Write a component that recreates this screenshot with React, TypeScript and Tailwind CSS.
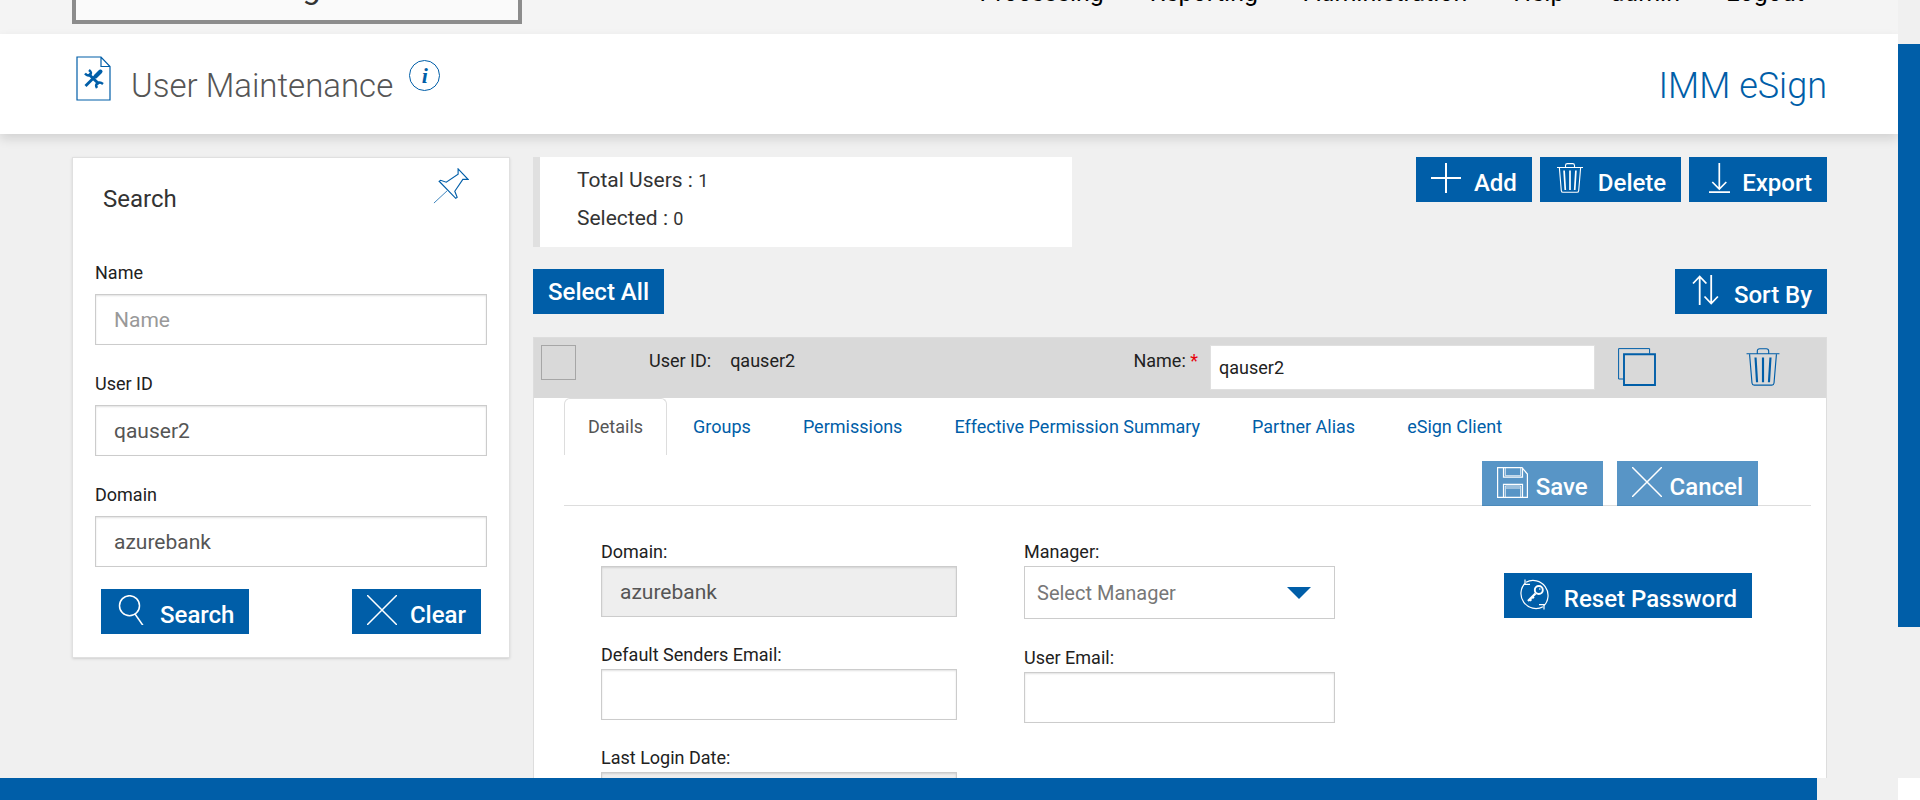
import React from "react";

const BLUE = "#005ea8";

type IconProps = { className?: string };

function Svg({ className, children, box = "0 0 30 30", w = 1.4 }: IconProps & { children: React.ReactNode; box?: string; w?: number }) {
  return (
    <svg viewBox={box} className={className} fill="none" stroke="currentColor" strokeWidth={w} aria-hidden="true">
      {children}
    </svg>
  );
}

const Plus = () => (
  <Svg className="size-[30px]" w={2}>
    <path d="M15 0v30M0 15h30" />
  </Svg>
);
const TrashPaths = () => (
  <>
    <path d="M2 4.500h26M10.500 4.500V2.500q0-1.900 1.900-1.900h5.200q1.900 0 1.900 1.900v2M4.400 5l1.900 22.600q.2 1.700 1.700 1.700h14q1.500 0 1.700-1.700L25.600 5" />
    <path d="M9.100 7.500l1.200 19.500M15 7.500V27M20.900 7.500L19.700 27" strokeWidth="1.700" />
  </>
);
const Trash = () => (
  <Svg className="size-[30px]" w={1.1}>
    <TrashPaths />
  </Svg>
);
const Download = () => (
  <Svg className="size-[30px]" w={1.7}>
    <path d="M15.300 0v26M8.300 19l7 7 7-7M5 29.200h21" />
  </Svg>
);
const Sort = () => (
  <Svg className="size-[30px]" w={1.8}>
    <path d="M9.700 30V2M3 8.500L9.700 1.500 16.400 8.500M21.200 0v28M14.500 21.500l6.700 7 6.700-7" />
  </Svg>
);
const Cross = () => (
  <Svg className="size-[30px]" w={1.5}>
    <path d="M0 0l30 30M30 0L0 30" />
  </Svg>
);
const Magnifier = () => (
  <Svg className="size-[30px]" w={1.5}>
    <circle cx="13.500" cy="10.700" r="10" />
    <path d="M19 19l8 11.500" />
  </Svg>
);
const Floppy = () => (
  <Svg className="size-[31px]" box="0 0 31 31" w={1.2}>
    <path d="M.6.6h24.400l5.400 6.400v23.400H.6zM6.500.6v9.600h19V.6M6.500 30.400V17.300h19v13.100" />
    <path d="M8.300 1v7.700h15.400V1M8.300 30V19h15.400v11M9 21h14" strokeWidth=".8" />
  </Svg>
);
const ResetKey = () => (
  <Svg className="size-[31px]" box="0 0 31 31" w={1.2}>
    <path d="M7 3.200A15 15 0 0 1 24.500 27.200M24 27.800A15 15 0 0 1 6.500 3.800M6 .5v4.800h5M25 30.500v-4.800h-5" />
    <circle cx="19.800" cy="11" r="4" strokeWidth="1.900" />
    <circle cx="20.800" cy="10" r=".8" fill="currentColor" stroke="none" />
    <path d="M16.500 14.500L9 22M13 17.500l1.800 1.800M10.500 20l1.800 1.800" strokeWidth="2.300" />
  </Svg>
);
const Pin = () => (
  <Svg className="size-9" box="0 0 38 38" w={1.2}>
    <path d="M26.500 1L37 12 31.500 12 23 24.500 25.500 31 24 32 6.500 14 8 13 14 15 26.500 6.500z" />
    <path d="M15 24L1 37" strokeWidth=".8" />
  </Svg>
);
const Copy = () => (
  <Svg className="size-[38px]" box="0 0 38 38" w={1}>
    <path d="M5.500 31H.6V.6h31v5" />
    <path d="M6 6.300h31v30.700H6z" strokeWidth="1.900" />
  </Svg>
);
const PageTools = () => (
  <svg viewBox="0 0 35 45" className="h-[45px] w-[35px]" fill="none" stroke={BLUE} strokeWidth="1.200" aria-hidden="true">
    <path d="M1 1h24l9 9.500V44H1zM25 1v9.500h9" />
    <path d="M12.500 18L23 28" strokeWidth="3" />
    <path d="M25 14.500L9.500 30" strokeWidth="2.800" />
    <path d="M24.500 15.500l-5 5" strokeWidth="4" strokeLinecap="round" />
    <path d="M9 17.500q2.500 3 5 1.200T13 14M27 28q-3-2.500-5.500-.8t-.5 4.800" strokeWidth="2.400" />
  </svg>
);

function ActionButton({ icon, label, className = "" }: { icon?: React.ReactNode; label: string; className?: string }) {
  return (
    <button type="button" className={`flex h-[45px] items-start bg-[#005ea8] px-[15px] text-2xl font-medium whitespace-nowrap text-white ${className}`}>
      {icon && <span className="mt-[6px] shrink-0">{icon}</span>}
      <span className={icon ? "mt-[10px]" : "mt-[7px]"}>{label}</span>
    </button>
  );
}

const inputClass =
  "h-[51px] w-full border border-[#ccc] bg-white px-[18px] text-[21px] text-[#555] shadow-[inset_0_1px_2px_rgba(0,0,0,0.12)] outline-none placeholder:text-[#999] disabled:bg-[#eee]";

function SearchField({ id, label, value }: { id: string; label: string; value?: string }) {
  return (
    <div>
      <label htmlFor={id} className="mb-[7px] block text-lg leading-7 text-[#212121]">{label}</label>
      <input id={id} className={inputClass} placeholder={label} defaultValue={value} />
    </div>
  );
}

function DetailField({ id, label, value, disabled }: { id: string; label: string; value?: string; disabled?: boolean }) {
  return (
    <div className="mb-6">
      <label htmlFor={id} className="block text-lg leading-7 text-[#212121]">{label}</label>
      <input id={id} className={inputClass} defaultValue={value} disabled={disabled} />
    </div>
  );
}

const navItems = ["Processing", "Reporting", "Administration", "Help", "admin", "Logout"];
const tabs = ["Groups", "Permissions", "Effective Permission Summary", "Partner Alias", "eSign Client"];

function TopBar() {
  return (
    <header className="flex h-[34px] items-end justify-between bg-[#f4f4f4] pr-[94px] pl-[72px]">
      <div className="mb-[10px] flex h-20 w-[450px] items-end justify-center border-4 border-[#8c8c8c] bg-[#fafafa] pb-4 text-[32px] leading-8 text-[#333]">
        Place Logo Here
      </div>
      <nav className="mb-[27px] flex gap-[46px] text-[25px] leading-7 text-black">
        {navItems.map((item) => (
          <a key={item} href="#">{item}</a>
        ))}
      </nav>
    </header>
  );
}

function SearchPanel() {
  return (
    <aside className="w-[438px] shrink-0 border border-[#e0e0e0] bg-white px-[22px] pb-[23px] shadow-sm">
      <div className="flex h-[101px] items-start justify-between pr-[18px] pl-2">
        <h2 className="mt-[25px] text-2xl leading-8 text-[#333]">Search</h2>
        <button type="button" aria-label="Pin" className="mt-[10px] text-[#005ea8]"><Pin /></button>
      </div>
      <div className="flex flex-col gap-[25px]">
        <SearchField id="name" label="Name" />
        <SearchField id="user-id" label="User ID" value="qauser2" />
        <SearchField id="domain" label="Domain" value="azurebank" />
      </div>
      <div className="mt-[22px] flex justify-between px-[6px]">
        <ActionButton icon={<Magnifier />} label="Search" className="gap-[14px]" />
        <ActionButton icon={<Cross />} label="Clear" className="gap-[13px]" />
      </div>
    </aside>
  );
}

function UserCard() {
  return (
    <section className="mt-[23px] border border-[#ddd] bg-white">
      <div className="flex h-[60px] items-start bg-[#d9d9d9] pl-[7px] text-lg leading-7 text-[#212121]">
        <input type="checkbox" aria-label="Select qauser2" className="mt-[7px] size-[35px] shrink-0 appearance-none border border-[#a6a6a6]" />
        <span className="mt-[9px] ml-[73px]">User ID:</span>
        <span className="mt-[9px] ml-[19px]">qauser2</span>
        <label htmlFor="user-name" className="mt-[9px] ml-auto">Name: <span className="text-red-600">*</span></label>
        <input id="user-name" defaultValue="qauser2" className="mt-[7px] ml-3 h-[45px] w-[385px] border border-[#e0e0e0] bg-white px-2 text-lg outline-none" />
        <button type="button" aria-label="Copy user" className="mt-[10px] ml-[23px] text-[#005ea8]"><Copy /></button>
        <button type="button" aria-label="Delete user" className="mt-[10px] mr-[44px] ml-[88px] text-[#005ea8]">
          <Svg className="size-[38px]" w={0.9}><TrashPaths /></Svg>
        </button>
      </div>
      <div className="pr-[15px] pl-[30px]">
        <div className="flex h-[57px] text-lg leading-7">
          <button type="button" className="mr-[26px] rounded-t-md border border-b-0 border-[#ddd] px-[23px] text-[#555]">Details</button>
          <div className="flex gap-[52px] text-[#005ea8]">
            {tabs.map((tab) => (
              <button type="button" key={tab}>{tab}</button>
            ))}
          </div>
        </div>
        <div className="flex justify-end gap-[14px] border-b border-[#ddd] pt-[6px] pr-[53px]">
          <ActionButton icon={<Floppy />} label="Save" className="-mb-px gap-[8px] opacity-65" />
          <ActionButton icon={<Cross />} label="Cancel" className="-mb-px gap-[8px] opacity-65" />
        </div>
        <div className="flex items-start pt-[32px] pr-[59px] pl-[37px]">
          <div className="w-[356px] shrink-0">
            <DetailField id="detail-domain" label="Domain:" value="azurebank" disabled />
            <DetailField id="sender-email" label="Default Senders Email:" />
            <DetailField id="last-login" label="Last Login Date:" disabled />
          </div>
          <div className="ml-[67px] w-[311px] shrink-0">
            <div className="mb-[25px]">
              <label htmlFor="manager" className="block text-lg leading-7 text-[#212121]">Manager:</label>
              <div className="relative">
                <select id="manager" className="h-[53px] w-full appearance-none border border-[#ccc] bg-white px-3 text-xl text-[#777] outline-none">
                  <option>Select Manager</option>
                </select>
                <svg viewBox="0 0 24 12" className="pointer-events-none absolute top-[21px] right-6 h-3 w-6" aria-hidden="true">
                  <path d="M0 0h24L12 12z" fill={BLUE} />
                </svg>
              </div>
            </div>
            <DetailField id="user-email" label="User Email:" />
          </div>
          <ActionButton icon={<ResetKey />} label="Reset Password" className="mt-[35px] ml-auto gap-[14px]" />
        </div>
      </div>
    </section>
  );
}

export default function App() {
  return (
    <div className="flex h-screen flex-col overflow-hidden bg-[#f0f0f0] font-['Roboto',sans-serif]">
      <div className="flex min-h-0 flex-1">
        <div className="min-w-0 flex-1 overflow-hidden">
          <TopBar />
          <div className="relative flex h-[100px] items-start bg-white pr-[71px] pl-[76px] shadow-[0_5px_10px_rgba(0,0,0,0.12)]">
            <span className="mt-[22px]"><PageTools /></span>
            <h1 className="mt-[30px] ml-5 text-[33px] leading-[44px] font-light text-[#555]">User Maintenance</h1>
            <button type="button" aria-label="Information" className="mt-[26px] ml-4 flex size-[31px] items-center justify-center rounded-full border border-[#005ea8] font-['Liberation_Serif',serif] text-[22px] leading-none font-bold text-[#005ea8] italic">i</button>
            <span className="mt-[30px] ml-auto text-4xl leading-[44px] font-light text-[#005ea8]">IMM eSign</span>
          </div>
          <main className="flex items-start gap-[23px] pt-[23px] pr-[71px] pl-[72px]">
            <SearchPanel />
            <div className="min-w-0 flex-1">
              <div className="flex items-start justify-between">
                <div className="h-[90px] w-[539px] border-l-[7px] border-[#e0e0e0] bg-white pt-1 pl-[37px] text-[21px] leading-[38px] text-[#333]">
                  <p>Total Users : <span className="text-lg">1</span></p>
                  <p>Selected : <span className="text-lg">0</span></p>
                </div>
                <div className="flex gap-2">
                  <ActionButton icon={<Plus />} label="Add" className="gap-[13px]" />
                  <ActionButton icon={<Trash />} label="Delete" className="gap-[13px]" />
                  <ActionButton icon={<Download />} label="Export" className="gap-[8px]" />
                </div>
              </div>
              <div className="mt-[22px] flex justify-between">
                <ActionButton label="Select All" />
                <ActionButton icon={<Sort />} label="Sort By" className="gap-[14px]" />
              </div>
              <UserCard />
            </div>
          </main>
        </div>
        <div className="w-[22px] shrink-0 pt-11">
          <div className="h-[583px] bg-[#005ea8]" />
        </div>
      </div>
      <div className="flex h-[22px] shrink-0">
        <div className="mr-[81px] flex-1 bg-[#005ea8]" />
        <div className="w-[22px] bg-white" />
      </div>
    </div>
  );
}
